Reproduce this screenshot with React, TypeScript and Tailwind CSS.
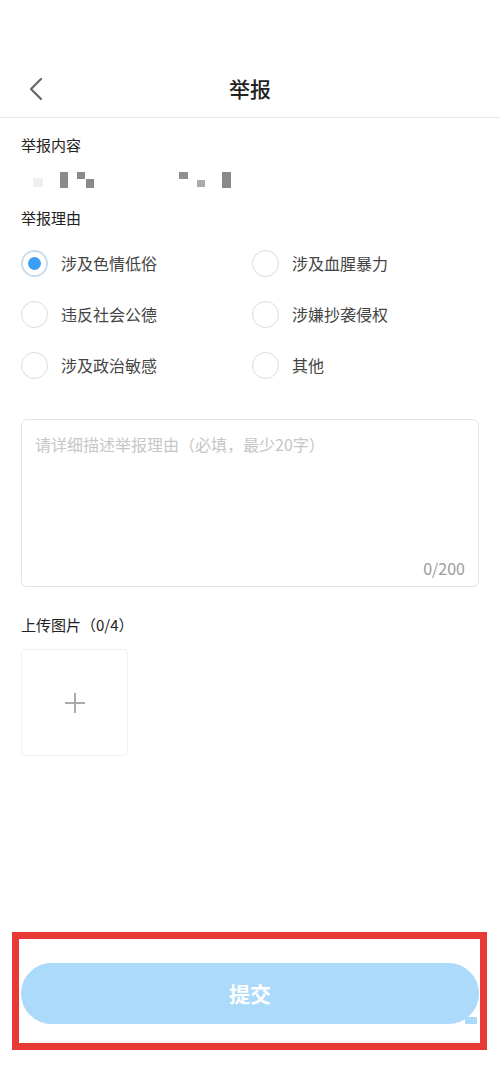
import React from "react";

const font = { fontFamily: '"Noto Sans CJK SC", "Noto Sans", sans-serif' };

const reasons = [
  "涉及色情低俗",
  "涉及血腥暴力",
  "违反社会公德",
  "涉嫌抄袭侵权",
  "涉及政治敏感",
  "其他",
];

function Radio({ checked }: { checked: boolean }) {
  if (checked) {
    return (
      <div className="w-[27px] h-[27px] rounded-full border-[2px] border-[#c9dcec] flex items-center justify-center shrink-0">
        <div className="w-[13px] h-[13px] rounded-full bg-[#3a9ef3]" />
      </div>
    );
  }
  return <div className="w-[27px] h-[27px] rounded-full border-[1.5px] border-[#dcdcdc] shrink-0" />;
}

export default function App() {
  return (
    <div className="w-[500px] min-h-[1083px] bg-white flex flex-col" style={font}>
      <div className="h-[60px]" />
      <div className="relative h-[58px] flex items-center justify-center border-b border-[#e8e8e8]">
        <svg className="absolute left-[28px] top-[17px]" width="16" height="24" viewBox="0 0 16 24" fill="none">
          <path d="M13 2 L3 12 L13 22" stroke="#666" strokeWidth="2.2" strokeLinecap="round" strokeLinejoin="round" />
        </svg>
        <span className="text-[21px] font-medium text-[#222] leading-none">举报</span>
      </div>

      <div className="px-[21px] flex flex-col">
        <div className="mt-[17px] h-[20px] text-[15px] leading-[20px] text-[#222]">举报内容</div>
        <svg className="mt-[17px]" width="240" height="17" viewBox="0 0 240 17">
          <rect x="12" y="6" width="10" height="9" fill="#efefef" />
          <rect x="39" y="0" width="8" height="16" fill="#8a8a8a" />
          <rect x="56" y="0" width="8" height="7" fill="#8a8a8a" />
          <rect x="65" y="7" width="8" height="9" fill="#8a8a8a" />
          <rect x="158" y="0" width="9" height="7" fill="#8e8e8e" />
          <rect x="176" y="8" width="8" height="7" fill="#ababab" />
          <rect x="201" y="0" width="9" height="16" fill="#8a8a8a" />
        </svg>
        <div className="mt-[19px] h-[20px] text-[15px] leading-[20px] text-[#222]">举报理由</div>

        <div className="mt-[10px] grid grid-cols-[231px_1fr]">
          {reasons.map((r, i) => (
            <div key={r} className="h-[51px] flex items-center gap-[13px]">
              <Radio checked={i === 0} />
              <span className="text-[16px] text-[#444] leading-none pb-[2px]">{r}</span>
            </div>
          ))}
        </div>

        <div className="mt-[28px] h-[168px] border border-[#e3e3e3] rounded-[6px] flex flex-col justify-between px-[13px] pt-[13px] pb-[7px]">
          <span className="text-[16px] leading-[22px] text-[#c6c6c6]">请详细描述举报理由（必填，最少20字）</span>
          <span className="self-end text-[16px] leading-[22px] text-[#9a9a9a]">0/200</span>
        </div>

        <div className="mt-[28px] h-[20px] text-[15px] leading-[20px] text-[#222]">上传图片（0/4）</div>
        <div className="mt-[14px] w-[107px] h-[107px] border border-[#f0f0f0] rounded-[5px] flex items-center justify-center">
          <svg width="22" height="22" viewBox="0 0 22 22">
            <path d="M11 1 V21 M1 11 H21" stroke="#aaaaaa" strokeWidth="2" />
          </svg>
        </div>
      </div>

      <div className="mt-[176px] ml-[12px] w-[475px] h-[118px] border-[7px] border-[#e83a35] pl-[2px] pr-[1px] pt-[24px]">
        <div className="relative h-[61px] rounded-full bg-[#acdafb] flex items-center justify-center">
          <span className="text-[21px] font-bold text-white leading-none">提交</span>
          <div className="absolute right-[2px] bottom-0 w-[12px] h-[7px] bg-[#acdafb]" />
        </div>
      </div>
    </div>
  );
}
